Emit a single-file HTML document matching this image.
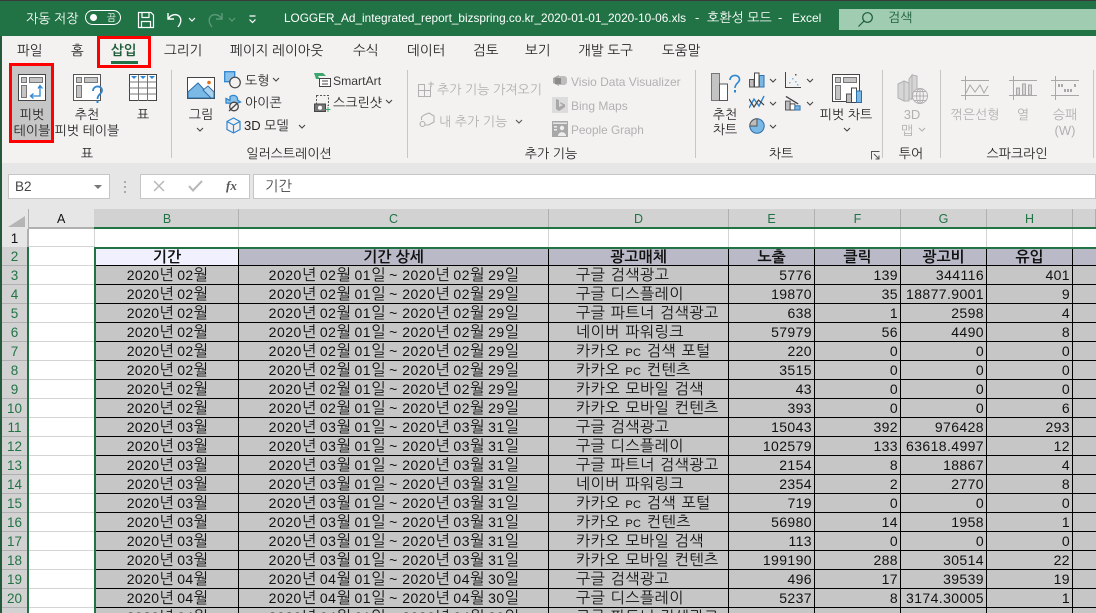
<!DOCTYPE html>
<html lang="ko"><head><meta charset="utf-8"><style>
html,body{margin:0;padding:0;width:1096px;height:613px;overflow:hidden;background:#fff}
body{position:relative;font-family:"Liberation Sans","NanumGothic","Noto Sans CJK KR",sans-serif;color:#262626}
div,svg{position:absolute}
.t{white-space:nowrap;font-size:13px;line-height:18px;height:18px}
.c{text-align:center;transform:translateX(-50%)}
.d{color:#b1b1b1}
.e12{font-size:12px}
.sep{top:70px;width:1px;height:88px;background:#c6c6c6}
.tab{top:42px;font-size:13.6px}
.v{width:1px;background:#d4d4d4;top:229px;height:18px}
.r{left:0;width:1096px;height:19px}
.rh{left:2px;width:25px;height:18px;background:#d2d2d2;color:#217346;text-align:center;font-size:13.5px;line-height:19px;border-bottom:1px solid #b0b0b0}
.a{left:29px;width:65px;height:18px;background:#fff;border-bottom:1px solid #d4d4d4}
.g{left:96px;width:1000px;height:18px;background:#c6c6c6;border-bottom:1px solid #000}
.x{white-space:nowrap;font-size:14px;line-height:18px;top:0;color:#111;letter-spacing:.35px}
.x i{font-style:normal;font-size:15.5px;letter-spacing:-.9px}
.b{left:96px;width:142px;text-align:center}
.cc{left:239px;width:309px;text-align:center;letter-spacing:.5px}
.dd{left:576px;top:1px;font-size:15.2px;word-spacing:.9px}
.dd u{text-decoration:none;font-size:11px}
.n{text-align:right;letter-spacing:.4px}
.e{left:729px;width:83px}.f{left:815px;width:83px}.gg{left:901px;width:83px}.h{left:987px;width:83px}
.l{width:1px;background:#000;top:249px;height:364px}
.ch{top:209px;height:18px;text-align:center;font-size:12.5px;line-height:20px;color:#217346;background:#d2d2d2;border-right:1px solid #b0b0b0;box-sizing:border-box}
.hd{font-size:15px;font-weight:bold;color:#111;text-align:center;white-space:nowrap;line-height:19px;top:248px}
.rb{border:3px solid #f00;box-sizing:border-box}
</style></head><body>
<!-- title bar -->
<div style="left:0;top:0;width:1096px;height:36px;background:#217346"></div>
<div style="left:0;top:0;width:1096px;height:1px;background:#3a3a3a"></div>
<div class="t" style="left:26px;top:10px;color:#fff;font-size:13px">자동 저장</div>
<div style="left:85px;top:10px;width:36px;height:15px;border:1.5px solid #fff;border-radius:9px;box-sizing:border-box"></div>
<div style="left:90px;top:14px;width:7px;height:7px;border-radius:50%;background:#fff"></div>
<div class="t" style="left:107px;top:10px;color:#fff;font-size:9.500px">끔</div>
<svg style="left:137px;top:11px" width="18" height="18" viewBox="0 0 18 18" fill="none" stroke="#fff" stroke-width="1.2"><path d="M1.500 1.500H14L16.500 4V16.500H1.500Z"/><path d="M5 1.500V6.500H12V1.500M4.500 16.500V10.500H13.500V16.500"/></svg>
<svg style="left:166px;top:11px" width="18" height="18" viewBox="0 0 18 18" fill="none" stroke="#fff" stroke-width="1.4"><path d="M2 2V8H8M2.500 7.500C5 3.500 10 2.500 13 5C15.500 7.500 15.500 11.500 12 16"/></svg>
<svg style="left:188px;top:17px" width="8" height="6" viewBox="0 0 8 6" fill="none" stroke="#fff" stroke-width="1.2"><path d="M1 1L4 4L7 1"/></svg>
<svg style="left:206px;top:11px" width="18" height="18" viewBox="0 0 18 18" fill="none" stroke="#5c9a79" stroke-width="1.4"><path d="M16 2V8H10M15.500 7.500C13 3.500 8 2.500 5 5C2.500 7.500 2.500 11.500 6 16"/></svg>
<svg style="left:228px;top:17px" width="8" height="6" viewBox="0 0 8 6" fill="none" stroke="#5c9a79" stroke-width="1.2"><path d="M1 1L4 4L7 1"/></svg>
<svg style="left:248px;top:15px" width="9" height="9" viewBox="0 0 9 9" fill="none" stroke="#fff" stroke-width="1.2"><path d="M1.500 1H7.500M1.500 4.500L4.500 7.500L7.500 4.500"/></svg>
<div class="t" style="left:284px;top:9px;color:#fff;font-size:11.800px">LOGGER_Ad_integrated_report_bizspring.co.kr_2020-01-01_2020-10-06.xls</div>
<div class="t" style="left:695px;top:9px;color:#fff;font-size:12.800px">-</div>
<div class="t" style="left:707px;top:9px;color:#fff;font-size:13px">호환성 모드</div>
<div class="t" style="left:778px;top:9px;color:#fff;font-size:12.800px">-</div>
<div class="t" style="left:792px;top:9px;color:#fff;font-size:12px">Excel</div>
<div style="left:839px;top:9px;width:257px;height:21px;background:#a0cdb2"></div>
<svg style="left:857px;top:11px" width="17" height="17" viewBox="0 0 17 17" fill="none" stroke="#1d5d3a" stroke-width="1.2"><circle cx="10.500" cy="6.500" r="4.800"/><path d="M7 10L1.500 15.500"/></svg>
<div class="t" style="left:888px;top:9px;color:#1d5d3a;font-size:13px">검색</div>
<!-- ribbon -->
<div style="left:0;top:36px;width:1096px;height:127px;background:#f3f2f1"></div>
<div style="left:0;top:163px;width:1096px;height:46px;background:#e6e6e6"></div>
<div style="left:0;top:36px;width:2px;height:577px;background:#24593c"></div>
<div class="t tab" style="left:17px">파일</div><div class="t tab" style="left:71px">홈</div>
<div class="t tab" style="left:111px;font-weight:bold;color:#1f5c3a">삽입</div>
<div style="left:111px;top:61px;width:27px;height:3px;background:#217346"></div>
<div class="rb" style="left:97px;top:36px;width:54px;height:32px"></div>
<div class="t tab" style="left:164px">그리기</div><div class="t tab" style="left:230px">페이지 레이아웃</div><div class="t tab" style="left:353px">수식</div><div class="t tab" style="left:407px">데이터</div><div class="t tab" style="left:473px">검토</div><div class="t tab" style="left:525px">보기</div><div class="t tab" style="left:578px">개발 도구</div><div class="t tab" style="left:662px">도움말</div>
<div style="left:12px;top:66px;width:39px;height:75px;background:#c6c6c6"></div>
<div class="rb" style="left:9px;top:63px;width:45px;height:80px"></div>
<!-- pivot icon -->
<svg style="left:18px;top:74px" width="28" height="28" viewBox="0 0 28 28"><rect x=".5" y=".5" width="27" height="26" fill="#fff" stroke="#444"/><rect x="3.500" y="3.500" width="5" height="5" fill="#c4c4c4" stroke="#777"/><rect x="11.500" y="3.500" width="13" height="5" fill="#c4c4c4" stroke="#777"/><rect x="3.500" y="11.500" width="5" height="12" fill="#c4c4c4" stroke="#777"/><path d="M22 12V22H13M20 14.500L22 11.500L24.500 14.500M15.500 19.500L12.500 22L15.500 24.500" fill="none" stroke="#2e86d1" stroke-width="1.300"/></svg>
<div class="t c" style="left:32px;top:106px">피벗</div><div class="t c" style="left:32px;top:122px">테이블</div>
<svg style="left:73px;top:74px" width="32" height="30" viewBox="0 0 32 30"><rect x=".5" y=".5" width="27" height="26" fill="#fff" stroke="#555"/><rect x="3.500" y="3.500" width="5" height="5" fill="#c4c4c4" stroke="#777"/><rect x="11.500" y="3.500" width="13" height="5" fill="#c4c4c4" stroke="#777"/><rect x="3.500" y="11.500" width="5" height="12" fill="#c4c4c4" stroke="#777"/><path d="M20 17C20 11 29 11 29 16.500C29 20 24.500 20 24.500 25" fill="none" stroke="#2e86d1" stroke-width="1.800"/><rect x="23.500" y="26.500" width="2" height="2.500" fill="#2e86d1"/></svg>
<div class="t c" style="left:87px;top:106px">추천</div><div class="t c" style="left:87px;top:122px">피벗 테이블</div>
<svg style="left:129px;top:74px" width="28" height="28" viewBox="0 0 28 28"><rect x=".5" y=".5" width="27" height="26" fill="#fff" stroke="#444"/><path d="M.5 8H27.500M.5 14H27.500M.5 20H27.500M9.500 1V27M18.500 1V27" stroke="#777" fill="none"/><path d="M2 2H8L5 5ZM11 2H17L14 5ZM20 2H26L23 5Z" fill="#2e86d1"/></svg>
<div class="t c" style="left:143px;top:106px">표</div>
<div class="t c" style="left:87px;top:145px">표</div>
<div class="sep" style="left:171px"></div>
<!-- illustrations -->
<svg style="left:187px;top:77px" width="28" height="22" viewBox="0 0 28 22"><rect x=".5" y=".5" width="27" height="21" fill="#fff" stroke="#444"/><path d="M1 15L11 6L25 21H1Z" fill="#7ab8e6" stroke="#2e6fa8"/><path d="M16 13L21 9L27 15V21H24Z" fill="#a9d2ee" stroke="#2e6fa8"/><circle cx="22" cy="5.500" r="1.800" fill="#e2711d"/></svg>
<div class="t c" style="left:201px;top:106px">그림</div>
<svg style="left:196px;top:127px" width="8" height="6" viewBox="0 0 8 6" fill="none" stroke="#444" stroke-width="1.100"><path d="M1 1L4 4L7 1"/></svg>
<svg style="left:224px;top:71px" width="18" height="18" viewBox="0 0 18 18"><rect x=".7" y=".7" width="10" height="10" fill="#8cc2ea" stroke="#2e86d1" stroke-width="1.300"/><circle cx="11" cy="11.500" r="5.300" fill="#f3f2f1" stroke="#444" stroke-width="1.200"/></svg>
<div class="t" style="left:245px;top:72px">도형</div>
<svg style="left:272px;top:77px" width="8" height="6" viewBox="0 0 8 6" fill="none" stroke="#444" stroke-width="1.100"><path d="M1 1L4 4L7 1"/></svg>
<svg style="left:225px;top:94px" width="17" height="18" viewBox="0 0 17 18" fill="none" stroke="#2e86d1" stroke-width="1.300"><path d="M1 4.500L5 6.500L5 2.500C9 0 13 2 12.500 6L15.500 8C13 9 12 9.500 9 9.500L1 9Z" fill="#8cc2ea"/><circle cx="9" cy="12.500" r="4.300" stroke="#444" fill="#f3f2f1"/><path d="M4 17L12 9.500" stroke="#444"/></svg>
<div class="t" style="left:245px;top:94px">아이콘</div>
<svg style="left:226px;top:117px" width="15" height="17" viewBox="0 0 15 17" fill="none" stroke="#2e86d1" stroke-width="1.200"><path d="M7.500 1L14 4.500V12.500L7.500 16L1 12.500V4.500ZM1 4.500L7.500 8L14 4.500M7.500 8V16"/></svg>
<div class="t" style="left:244px;top:117px">3D 모델</div>
<svg style="left:298px;top:124px" width="8" height="6" viewBox="0 0 8 6" fill="none" stroke="#444" stroke-width="1.100"><path d="M1 1L4 4L7 1"/></svg>
<svg style="left:314px;top:72px" width="17" height="15" viewBox="0 0 17 15"><path d="M0 1H9L12 4H4L6 7H2Z" fill="#3ea56f"/><rect x="5.500" y="6.500" width="11" height="8" fill="#fff" stroke="#444"/><path d="M8 9H14M8 12H14" stroke="#444"/></svg>
<div class="t" style="left:333px;top:72px;color:#3a3a3a;font-size:12.200px">SmartArt</div>
<svg style="left:314px;top:95px" width="17" height="17" viewBox="0 0 17 17" fill="none"><rect x="2.500" y=".5" width="12" height="10" stroke="#555" stroke-dasharray="2 1.500"/><rect x=".5" y="9" width="11" height="7.500" fill="#777" stroke="#444"/><circle cx="6" cy="12.700" r="2" fill="#fff"/><path d="M14 12V17M11.500 14.500H16.500" stroke="#3ea56f"/></svg>
<div class="t" style="left:333px;top:94px">스크린샷</div>
<svg style="left:385px;top:99px" width="8" height="6" viewBox="0 0 8 6" fill="none" stroke="#444" stroke-width="1.100"><path d="M1 1L4 4L7 1"/></svg>
<div class="t c" style="left:289px;top:145px">일러스트레이션</div>
<div class="sep" style="left:407px"></div>
<!-- addins -->
<svg style="left:418px;top:81px" width="17" height="16" viewBox="0 0 17 16" fill="none" stroke="#b1b1b1"><path d="M.5 3.500H6.500V15.500H.5ZM.5 9.500H12.500V15.500H6.500M12.500 9.500V5M6.500 9.500H.5M13 .5V6M10.500 3H16"/></svg>
<div class="t d" style="left:437px;top:81px">추가 기능 가져오기</div>
<svg style="left:419px;top:112px" width="16" height="16" viewBox="0 0 16 16" fill="none" stroke="#b1b1b1" stroke-width="1.100"><path d="M5 3L10 1L15 4V10L9.500 13H6M2.500 8V5L5 3"/><circle cx="3.500" cy="12" r="2.500"/></svg>
<div class="t d" style="left:439px;top:113px">내 추가 기능</div>
<svg style="left:515px;top:119px" width="8" height="6" viewBox="0 0 8 6" fill="none" stroke="#555" stroke-width="1.100"><path d="M1 1L4 4L7 1"/></svg>
<svg style="left:552px;top:73px" width="16" height="16" viewBox="0 0 16 16"><path d="M1 5L7 2V13L1 10Z" fill="#a8a8a8"/><rect x="5" y="3" width="10" height="9" rx="3" fill="#bdbdbd"/><rect x="3" y="5" width="6" height="6" fill="#8b8b8b"/></svg>
<div class="t d e12" style="left:571px;top:73px">Visio Data Visualizer</div>
<div style="left:552px;top:97px;width:16px;height:16px;background:#dcdcdc"></div>
<svg style="left:555px;top:98px" width="11" height="14" viewBox="0 0 11 14"><path d="M1 1L4 2V9L8 7L5.500 6L5 4L10 6.500V9L4 13L1 11Z" fill="#a8a8a8"/></svg>
<div class="t d e12" style="left:571px;top:97px">Bing Maps</div>
<svg style="left:552px;top:121px" width="16" height="16" viewBox="0 0 16 16"><rect width="16" height="16" fill="#a8a8a8"/><rect x="1" y="1.500" width="14" height="1.500" fill="#e6e6e6"/><circle cx="10" cy="7" r="2.200" fill="#eee"/><path d="M6 15C6 10 14 10 14 15Z" fill="#eee"/><rect x="2" y="5" width="3" height="1.500" fill="#eee"/><rect x="2" y="8" width="3" height="1.500" fill="#eee"/></svg>
<div class="t d" style="left:571px;top:121px;font-size:11.800px">People Graph</div>
<div class="t c" style="left:551px;top:145px">추가 기능</div>
<div class="sep" style="left:695px"></div>
<!-- charts -->
<svg style="left:711px;top:73px" width="30" height="30" viewBox="0 0 30 30"><rect x=".5" y=".5" width="8" height="27" fill="#c4c4c4" stroke="#777"/><rect x="8.500" y="11" width="8" height="16.500" fill="#fff" stroke="#555"/><path d="M19 7C19 1 28.500 1 28.500 6.500C28.500 10 24 10 24 15" fill="none" stroke="#2e86d1" stroke-width="1.600"/><rect x="23" y="17" width="2" height="2.500" fill="#2e86d1"/></svg>
<div class="t c" style="left:725px;top:106px">추천</div><div class="t c" style="left:725px;top:121px">차트</div>
<svg style="left:749px;top:72px" width="16" height="16" viewBox="0 0 16 16"><rect x=".5" y="7.500" width="4.500" height="7.500" fill="#bdbdbd" stroke="#555"/><rect x="5.500" y="1" width="4.500" height="14" fill="#fff" stroke="#444"/><rect x="10.500" y="3.500" width="4.500" height="11.500" fill="#7ab8e6" stroke="#2e6fa8"/></svg>
<svg style="left:769px;top:78px" width="8" height="6" viewBox="0 0 8 6" fill="none" stroke="#444" stroke-width="1.100"><path d="M1 1L4 4L7 1"/></svg>
<svg style="left:749px;top:94px" width="16" height="16" viewBox="0 0 16 16" fill="none"><path d="M0 14L5 5L10 12L15 2" stroke="#2e86d1" stroke-width="1.400"/><path d="M0 5L5 13L9.500 6L15 11" stroke="#444" stroke-width="1.200"/></svg>
<svg style="left:769px;top:101px" width="8" height="6" viewBox="0 0 8 6" fill="none" stroke="#444" stroke-width="1.100"><path d="M1 1L4 4L7 1"/></svg>
<svg style="left:749px;top:118px" width="16" height="16" viewBox="0 0 16 16"><circle cx="8" cy="8" r="7.200" fill="#7ab8e6" stroke="#2e6fa8"/><path d="M8 8V.8A7.200 7.200 0 0 0 .8 8Z" fill="#bdbdbd" stroke="#555"/></svg>
<svg style="left:769px;top:124px" width="8" height="6" viewBox="0 0 8 6" fill="none" stroke="#444" stroke-width="1.100"><path d="M1 1L4 4L7 1"/></svg>
<svg style="left:785px;top:72px" width="16" height="16" viewBox="0 0 16 16"><path d="M.5 0V15.500H16" fill="none" stroke="#444"/><g fill="#7ab8e6"><rect x="4" y="10" width="1.500" height="1.500"/><rect x="7" y="6" width="1.500" height="1.500"/><rect x="10" y="9" width="1.500" height="1.500"/><rect x="12" y="12" width="1.500" height="1.500"/></g><rect x="10" y="2" width="1.500" height="1.500" fill="#555"/></svg>
<svg style="left:806px;top:78px" width="8" height="6" viewBox="0 0 8 6" fill="none" stroke="#444" stroke-width="1.100"><path d="M1 1L4 4L7 1"/></svg>
<svg style="left:785px;top:94px" width="16" height="17" viewBox="0 0 17 17"><rect x=".5" y="7" width="5" height="9.500" fill="#bdbdbd" stroke="#555"/><rect x="5.500" y="10" width="5" height="6.500" fill="#fff" stroke="#444"/><rect x="10.500" y="12" width="5.500" height="4.500" fill="#7ab8e6" stroke="#2e6fa8"/><path d="M1 2L14 10" stroke="#444" stroke-width="1.400"/></svg>
<svg style="left:806px;top:101px" width="8" height="6" viewBox="0 0 8 6" fill="none" stroke="#444" stroke-width="1.100"><path d="M1 1L4 4L7 1"/></svg>
<svg style="left:832px;top:74px" width="31" height="29" viewBox="0 0 31 29"><rect x=".5" y=".5" width="27" height="27" fill="#fff" stroke="#444"/><rect x="3.500" y="3.500" width="5" height="5" fill="#c4c4c4" stroke="#777"/><rect x="11.500" y="3.500" width="13" height="5" fill="#c4c4c4" stroke="#777"/><rect x="3.500" y="11.500" width="5" height="14" fill="#c4c4c4" stroke="#777"/><rect x="14.500" y="20" width="5" height="8.500" fill="#bdbdbd" stroke="#555"/><rect x="19.500" y="14" width="5" height="14.500" fill="#fff" stroke="#444"/><rect x="24.500" y="17" width="5" height="11.500" fill="#7ab8e6" stroke="#2e6fa8"/></svg>
<div class="t c" style="left:846px;top:106px">피벗 차트</div>
<svg style="left:843px;top:127px" width="8" height="6" viewBox="0 0 8 6" fill="none" stroke="#444" stroke-width="1.100"><path d="M1 1L4 4L7 1"/></svg>
<div class="t c" style="left:781px;top:145px">차트</div>
<svg style="left:871px;top:151px" width="9" height="9" viewBox="0 0 9 9" fill="none" stroke="#555"><path d="M.5 8.500V.5H8.500M3 3L8 8M8 4.500V8H4.500"/></svg>
<div class="sep" style="left:882px"></div>
<!-- tour -->
<svg style="left:897px;top:73px" width="32" height="32" viewBox="0 0 32 32" fill="#d6d6d6" stroke="#b1b1b1"><path d="M1 11L7 8V28L1 25ZM7 8L12 10V28H7ZM12 6L15 2V26H12ZM15 2L20 3V19L15 26Z"/><circle cx="23" cy="23" r="7.500" fill="#f3f2f1"/><path d="M15.500 23H30.500M23 15.500V30.500M17 18.500H29M17 27.500H29" fill="none"/><ellipse cx="23" cy="23" rx="3.500" ry="7.500" fill="none"/></svg>
<div class="t c d" style="left:912px;top:106px">3D</div><div class="t d" style="left:901px;top:122px">맵</div>
<svg style="left:918px;top:127px" width="8" height="6" viewBox="0 0 8 6" fill="none" stroke="#b1b1b1" stroke-width="1.100"><path d="M1 1L4 4L7 1"/></svg>
<div class="t c" style="left:911px;top:145px">투어</div>
<div class="sep" style="left:940px"></div>
<!-- sparklines -->
<svg style="left:961px;top:76px" width="28" height="24" viewBox="0 0 28 24" fill="none" stroke="#a8a8a8"><path d="M0 4.500H28M0 19.500H28M4.500 0V24M5 17L9 9L14 16L19 9L23 17L27 10"/></svg>
<svg style="left:1009px;top:76px" width="28" height="24" viewBox="0 0 28 24" fill="none" stroke="#a8a8a8"><path d="M0 4.500H28M0 19.500H28M4.500 0V24"/><rect x="7.500" y="12" width="3" height="7" fill="#d6d6d6"/><rect x="13.500" y="8" width="3" height="11" fill="#d6d6d6"/><rect x="19.500" y="9" width="3" height="10" fill="#d6d6d6"/></svg>
<svg style="left:1051px;top:76px" width="28" height="24" viewBox="0 0 28 24" fill="none" stroke="#a8a8a8"><path d="M0 4.500H28M0 19.500H28M4.500 0V24"/><path d="M8 8V11M11 8V11M14 13V16M17 13V16M20 13V16M24 8V11" stroke="#a8a8a8" stroke-width="2"/></svg>
<div class="t c d" style="left:975px;top:106px">꺾은선형</div><div class="t c d" style="left:1023px;top:106px">열</div><div class="t c d" style="left:1065px;top:106px">승패</div><div class="t c d" style="left:1065px;top:122px">(W)</div>
<div class="t c" style="left:1017px;top:145px">스파크라인</div>
<div class="sep" style="left:1093px"></div>
<!-- formula bar -->
<div style="left:8px;top:174px;width:102px;height:25px;background:#fff;border:1px solid #c6c6c6;box-sizing:border-box"></div>
<div class="t" style="left:15px;top:178px;font-size:13.500px;color:#444">B2</div>
<div style="left:94px;top:185px;width:0;height:0;border-left:4px solid transparent;border-right:4px solid transparent;border-top:4px solid #777"></div>
<div style="left:124px;top:181px;width:2px;height:2px;background:#aaa;box-shadow:0 5px 0 #aaa,0 10px 0 #aaa"></div>
<div style="left:140px;top:174px;width:110px;height:25px;background:#fff;border:1px solid #c6c6c6;box-sizing:border-box"></div>
<svg style="left:153px;top:180px" width="12" height="12" viewBox="0 0 12 12" fill="none" stroke="#b8b8b8" stroke-width="1.500"><path d="M1 1L11 11M11 1L1 11"/></svg>
<svg style="left:188px;top:180px" width="15" height="12" viewBox="0 0 15 12" fill="none" stroke="#b8b8b8" stroke-width="2"><path d="M1 6L5 10.500L14 1"/></svg>
<div class="t" style="left:226px;top:177px;font:italic bold 13px 'Liberation Serif',serif;line-height:18px;color:#555">fx</div>
<div style="left:253px;top:174px;width:843px;height:25px;background:#fff;border:1px solid #c6c6c6;box-sizing:border-box"></div>
<div class="t" style="left:265px;top:178px;font-size:14.300px;color:#444">기간</div>
<!-- headers -->
<div style="left:2px;top:209px;width:92px;height:20px;background:#e6e6e6"></div>
<div style="left:8px;top:216px;width:0;height:0;border-left:17px solid transparent;border-bottom:11px solid #b5b5b5"></div>
<div style="left:28px;top:209px;width:1px;height:20px;background:#b0b0b0"></div>
<div style="left:29px;top:227px;width:65px;height:2px;background:#b0b0b0"></div>
<div class="t" style="left:57px;top:210px;font-size:12.500px;color:#111">A</div>
<div class="ch" style="left:94px;width:145px;padding-left:2px">B</div><div class="ch" style="left:239px;width:310px">C</div><div class="ch" style="left:549px;width:180px">D</div><div class="ch" style="left:729px;width:86px">E</div><div class="ch" style="left:815px;width:86px">F</div><div class="ch" style="left:901px;width:86px">G</div><div class="ch" style="left:987px;width:86px">H</div><div class="ch" style="left:1073px;width:23px"></div>
<div style="left:94px;top:227px;width:1002px;height:2px;background:#217346"></div>
<!-- row 1 -->
<div style="left:2px;top:229px;width:25px;height:18px;background:#e6e6e6;color:#111;text-align:center;font-size:13.500px;line-height:19px">1</div>
<div style="left:27px;top:229px;width:2px;height:18px;background:#b0b0b0"></div>
<div class="v" style="left:94px"></div><div class="v" style="left:238px"></div><div class="v" style="left:548px"></div><div class="v" style="left:728px"></div><div class="v" style="left:814px"></div><div class="v" style="left:900px"></div><div class="v" style="left:986px"></div><div class="v" style="left:1072px"></div>
<div style="left:29px;top:246px;width:65px;height:1px;background:#d4d4d4"></div>
<!-- row 2 -->
<div class="r" style="top:247px"><div class="rh" style="height:18px">2</div><div class="a"></div><div style="left:96px;top:2px;width:1000px;height:16px;background:#b9b9c7;border-bottom:1px solid #000"></div><div style="left:96px;top:2px;width:142px;height:16px;background:#f0f0ff;border-bottom:1px solid #000"></div></div>
<div class="hd" style="left:96px;width:142px">기간</div><div class="hd" style="left:239px;width:309px">기간 상세</div><div class="hd" style="left:549px;width:179px">광고매체</div><div class="hd" style="left:729px;width:85px">노출</div><div class="hd" style="left:815px;width:85px">클릭</div><div class="hd" style="left:901px;width:85px">광고비</div><div class="hd" style="left:987px;width:85px">유입</div>
<!-- rows -->
<div class="r" style="top:266px"><div class="rh">3</div><div class="a"></div><div class="g"></div><div class="x b">2020<i>년</i> 02<i>월</i></div><div class="x cc">2020<i>년</i> 02<i>월</i> 01<i>일</i> ~ 2020<i>년</i> 02<i>월</i> 29<i>일</i></div><div class="x dd">구글 검색광고</div><div class="x n e">5776</div><div class="x n f">139</div><div class="x n gg">344116</div><div class="x n h">401</div></div>
<div class="r" style="top:285px"><div class="rh">4</div><div class="a"></div><div class="g"></div><div class="x b">2020<i>년</i> 02<i>월</i></div><div class="x cc">2020<i>년</i> 02<i>월</i> 01<i>일</i> ~ 2020<i>년</i> 02<i>월</i> 29<i>일</i></div><div class="x dd">구글 디스플레이</div><div class="x n e">19870</div><div class="x n f">35</div><div class="x n gg">18877.9001</div><div class="x n h">9</div></div>
<div class="r" style="top:304px"><div class="rh">5</div><div class="a"></div><div class="g"></div><div class="x b">2020<i>년</i> 02<i>월</i></div><div class="x cc">2020<i>년</i> 02<i>월</i> 01<i>일</i> ~ 2020<i>년</i> 02<i>월</i> 29<i>일</i></div><div class="x dd">구글 파트너 검색광고</div><div class="x n e">638</div><div class="x n f">1</div><div class="x n gg">2598</div><div class="x n h">4</div></div>
<div class="r" style="top:323px"><div class="rh">6</div><div class="a"></div><div class="g"></div><div class="x b">2020<i>년</i> 02<i>월</i></div><div class="x cc">2020<i>년</i> 02<i>월</i> 01<i>일</i> ~ 2020<i>년</i> 02<i>월</i> 29<i>일</i></div><div class="x dd">네이버 파워링크</div><div class="x n e">57979</div><div class="x n f">56</div><div class="x n gg">4490</div><div class="x n h">8</div></div>
<div class="r" style="top:342px"><div class="rh">7</div><div class="a"></div><div class="g"></div><div class="x b">2020<i>년</i> 02<i>월</i></div><div class="x cc">2020<i>년</i> 02<i>월</i> 01<i>일</i> ~ 2020<i>년</i> 02<i>월</i> 29<i>일</i></div><div class="x dd">카카오 <u>PC</u> 검색 포털</div><div class="x n e">220</div><div class="x n f">0</div><div class="x n gg">0</div><div class="x n h">0</div></div>
<div class="r" style="top:361px"><div class="rh">8</div><div class="a"></div><div class="g"></div><div class="x b">2020<i>년</i> 02<i>월</i></div><div class="x cc">2020<i>년</i> 02<i>월</i> 01<i>일</i> ~ 2020<i>년</i> 02<i>월</i> 29<i>일</i></div><div class="x dd">카카오 <u>PC</u> 컨텐츠</div><div class="x n e">3515</div><div class="x n f">0</div><div class="x n gg">0</div><div class="x n h">0</div></div>
<div class="r" style="top:380px"><div class="rh">9</div><div class="a"></div><div class="g"></div><div class="x b">2020<i>년</i> 02<i>월</i></div><div class="x cc">2020<i>년</i> 02<i>월</i> 01<i>일</i> ~ 2020<i>년</i> 02<i>월</i> 29<i>일</i></div><div class="x dd">카카오 모바일 검색</div><div class="x n e">43</div><div class="x n f">0</div><div class="x n gg">0</div><div class="x n h">0</div></div>
<div class="r" style="top:399px"><div class="rh">10</div><div class="a"></div><div class="g"></div><div class="x b">2020<i>년</i> 02<i>월</i></div><div class="x cc">2020<i>년</i> 02<i>월</i> 01<i>일</i> ~ 2020<i>년</i> 02<i>월</i> 29<i>일</i></div><div class="x dd">카카오 모바일 컨텐츠</div><div class="x n e">393</div><div class="x n f">0</div><div class="x n gg">0</div><div class="x n h">6</div></div>
<div class="r" style="top:418px"><div class="rh">11</div><div class="a"></div><div class="g"></div><div class="x b">2020<i>년</i> 03<i>월</i></div><div class="x cc">2020<i>년</i> 03<i>월</i> 01<i>일</i> ~ 2020<i>년</i> 03<i>월</i> 31<i>일</i></div><div class="x dd">구글 검색광고</div><div class="x n e">15043</div><div class="x n f">392</div><div class="x n gg">976428</div><div class="x n h">293</div></div>
<div class="r" style="top:437px"><div class="rh">12</div><div class="a"></div><div class="g"></div><div class="x b">2020<i>년</i> 03<i>월</i></div><div class="x cc">2020<i>년</i> 03<i>월</i> 01<i>일</i> ~ 2020<i>년</i> 03<i>월</i> 31<i>일</i></div><div class="x dd">구글 디스플레이</div><div class="x n e">102579</div><div class="x n f">133</div><div class="x n gg">63618.4997</div><div class="x n h">12</div></div>
<div class="r" style="top:456px"><div class="rh">13</div><div class="a"></div><div class="g"></div><div class="x b">2020<i>년</i> 03<i>월</i></div><div class="x cc">2020<i>년</i> 03<i>월</i> 01<i>일</i> ~ 2020<i>년</i> 03<i>월</i> 31<i>일</i></div><div class="x dd">구글 파트너 검색광고</div><div class="x n e">2154</div><div class="x n f">8</div><div class="x n gg">18867</div><div class="x n h">4</div></div>
<div class="r" style="top:475px"><div class="rh">14</div><div class="a"></div><div class="g"></div><div class="x b">2020<i>년</i> 03<i>월</i></div><div class="x cc">2020<i>년</i> 03<i>월</i> 01<i>일</i> ~ 2020<i>년</i> 03<i>월</i> 31<i>일</i></div><div class="x dd">네이버 파워링크</div><div class="x n e">2354</div><div class="x n f">2</div><div class="x n gg">2770</div><div class="x n h">8</div></div>
<div class="r" style="top:494px"><div class="rh">15</div><div class="a"></div><div class="g"></div><div class="x b">2020<i>년</i> 03<i>월</i></div><div class="x cc">2020<i>년</i> 03<i>월</i> 01<i>일</i> ~ 2020<i>년</i> 03<i>월</i> 31<i>일</i></div><div class="x dd">카카오 <u>PC</u> 검색 포털</div><div class="x n e">719</div><div class="x n f">0</div><div class="x n gg">0</div><div class="x n h">0</div></div>
<div class="r" style="top:513px"><div class="rh">16</div><div class="a"></div><div class="g"></div><div class="x b">2020<i>년</i> 03<i>월</i></div><div class="x cc">2020<i>년</i> 03<i>월</i> 01<i>일</i> ~ 2020<i>년</i> 03<i>월</i> 31<i>일</i></div><div class="x dd">카카오 <u>PC</u> 컨텐츠</div><div class="x n e">56980</div><div class="x n f">14</div><div class="x n gg">1958</div><div class="x n h">1</div></div>
<div class="r" style="top:532px"><div class="rh">17</div><div class="a"></div><div class="g"></div><div class="x b">2020<i>년</i> 03<i>월</i></div><div class="x cc">2020<i>년</i> 03<i>월</i> 01<i>일</i> ~ 2020<i>년</i> 03<i>월</i> 31<i>일</i></div><div class="x dd">카카오 모바일 검색</div><div class="x n e">113</div><div class="x n f">0</div><div class="x n gg">0</div><div class="x n h">0</div></div>
<div class="r" style="top:551px"><div class="rh">18</div><div class="a"></div><div class="g"></div><div class="x b">2020<i>년</i> 03<i>월</i></div><div class="x cc">2020<i>년</i> 03<i>월</i> 01<i>일</i> ~ 2020<i>년</i> 03<i>월</i> 31<i>일</i></div><div class="x dd">카카오 모바일 컨텐츠</div><div class="x n e">199190</div><div class="x n f">288</div><div class="x n gg">30514</div><div class="x n h">22</div></div>
<div class="r" style="top:570px"><div class="rh">19</div><div class="a"></div><div class="g"></div><div class="x b">2020<i>년</i> 04<i>월</i></div><div class="x cc">2020<i>년</i> 04<i>월</i> 01<i>일</i> ~ 2020<i>년</i> 04<i>월</i> 30<i>일</i></div><div class="x dd">구글 검색광고</div><div class="x n e">496</div><div class="x n f">17</div><div class="x n gg">39539</div><div class="x n h">19</div></div>
<div class="r" style="top:589px"><div class="rh">20</div><div class="a"></div><div class="g"></div><div class="x b">2020<i>년</i> 04<i>월</i></div><div class="x cc">2020<i>년</i> 04<i>월</i> 01<i>일</i> ~ 2020<i>년</i> 04<i>월</i> 30<i>일</i></div><div class="x dd">구글 디스플레이</div><div class="x n e">5237</div><div class="x n f">8</div><div class="x n gg">3174.30005</div><div class="x n h">1</div></div>
<div class="r" style="top:608px"><div class="rh"></div><div class="a"></div><div class="g"></div><div class="x b">2020<i>년</i> 04<i>월</i></div><div class="x cc">2020<i>년</i> 04<i>월</i> 01<i>일</i> ~ 2020<i>년</i> 04<i>월</i> 30<i>일</i></div><div class="x dd">구글 파트너 검색광고</div></div>
<!-- vertical grid lines -->
<div class="l" style="left:238px"></div><div class="l" style="left:548px"></div><div class="l" style="left:728px"></div><div class="l" style="left:814px"></div><div class="l" style="left:900px"></div><div class="l" style="left:986px"></div><div class="l" style="left:1072px"></div>
<!-- selection -->
<div style="left:94px;top:247px;width:1002px;height:2px;background:#217346"></div>
<div style="left:94px;top:247px;width:2px;height:366px;background:#217346"></div>
<div style="left:27px;top:247px;width:2px;height:366px;background:#217346"></div>
</body></html>
